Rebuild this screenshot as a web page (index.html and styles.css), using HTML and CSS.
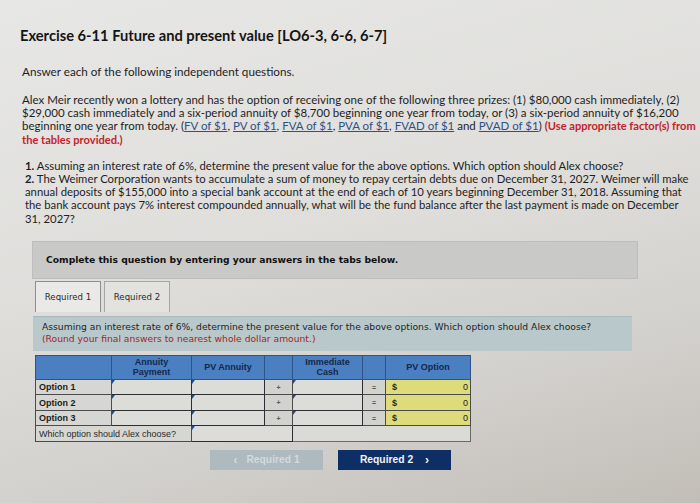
FILE: index.html
```html
<!DOCTYPE html>
<html lang="en">
<head>
<meta charset="utf-8">
<title>Exercise 6-11</title>
<link rel="stylesheet" href="styles.css">
</head>
<body>
<div class="page">
  <h1 class="title">Exercise 6-11 Future and present value [LO6-3, 6-6, 6-7]</h1>
  <p class="intro">Answer each of the following independent questions.</p>
  <p class="para">Alex Meir recently won a lottery and has the option of receiving one of the following three prizes: (1) $80,000 cash immediately, (2)<br>$29,000 cash immediately and a six-period annuity of $8,700 beginning one year from today, or (3) a six-period annuity of $16,200<br>beginning one year from today. (<a href="#">FV of $1</a>, <a href="#">PV of $1</a>, <a href="#">FVA of $1</a>, <a href="#">PVA of $1</a>, <a href="#">FVAD of $1</a> and <a href="#">PVAD of $1</a>) <span class="red">(Use appropriate factor(s) from<br>the tables provided.)</span></p>
  <p class="list"><b>1.</b> Assuming an interest rate of 6%, determine the present value for the above options. Which option should Alex choose?<br><b>2.</b> The Weimer Corporation wants to accumulate a sum of money to repay certain debts due on December 31, 2027. Weimer will make<br>annual deposits of $155,000 into a special bank account at the end of each of 10 years beginning December 31, 2018. Assuming that<br>the bank account pays 7% interest compounded annually, what will be the fund balance after the last payment is made on December<br>31, 2027?</p>

  <div class="complete">Complete this question by entering your answers in the tabs below.</div>

  <div class="tabs">
    <div class="tab tab-active">Required 1</div>
    <div class="tab">Required 2</div>
  </div>

  <div class="panel">
    <div class="panel-line">Assuming an interest rate of 6%, determine the present value for the above options. Which option should Alex choose?</div>
    <div class="panel-line panel-red">(Round your final answers to nearest whole dollar amount.)</div>
  </div>

  <table class="grid">
    <colgroup>
      <col class="c-label"><col class="c-pay"><col class="c-pva"><col class="c-op1"><col class="c-cash"><col class="c-op2"><col class="c-pvo">
    </colgroup>
    <thead>
      <tr>
        <th></th>
        <th>Annuity<br>Payment</th>
        <th>PV Annuity</th>
        <th></th>
        <th>Immediate<br>Cash</th>
        <th></th>
        <th>PV Option</th>
      </tr>
    </thead>
    <tbody>
      <tr>
        <td class="label">Option 1</td>
        <td class="input"></td>
        <td class="input"></td>
        <td class="op">+</td>
        <td class="input"></td>
        <td class="op">=</td>
        <td class="pvo"><span class="dollar">$</span><span>0</span></td>
      </tr>
      <tr>
        <td class="label">Option 2</td>
        <td class="input"></td>
        <td class="input"></td>
        <td class="op">+</td>
        <td class="input"></td>
        <td class="op">=</td>
        <td class="pvo"><span class="dollar">$</span><span>0</span></td>
      </tr>
      <tr>
        <td class="label">Option 3</td>
        <td class="input"></td>
        <td class="input"></td>
        <td class="op">+</td>
        <td class="input"></td>
        <td class="op">=</td>
        <td class="pvo"><span class="dollar">$</span><span>0</span></td>
      </tr>
      <tr>
        <td class="label label-plain" colspan="2">Which option should Alex choose?</td>
        <td class="input" colspan="2"></td>
        <td class="blank" colspan="3"></td>
      </tr>
    </tbody>
  </table>

  <div class="nav">
    <div class="btn btn-prev"><span class="chev">&lsaquo;</span>Required 1</div>
    <div class="btn btn-next">Required 2<span class="chev chev-r">&rsaquo;</span></div>
  </div>
</div>
</body>
</html>
```

FILE: styles.css
```css
html, body {
  margin: 0;
  padding: 0;
}
body {
  width: 700px;
  height: 503px;
  overflow: hidden;
  background: linear-gradient(165deg, #e7e7e5 0%, #dfdedb 45%, #d2d0cc 75%, #c2bdb7 100%);
  font-family: "Lato", "Liberation Sans", sans-serif;
  color: #1e1e1e;
}
.page {
  padding: 26px 10px 0 20px;
}
.title {
  margin: 0;
  font-size: 14.7px;
  line-height: 18px;
  font-weight: 700;
  color: #151515;
}
.intro {
  margin: 20px 0 0 2px;
  font-size: 11.7px;
  line-height: 14px;
}
.para {
  margin: 15px 0 0 2px;
  font-size: 11.5px;
  line-height: 13.2px;
  white-space: nowrap;
}
.para a {
  color: #2d5187;
  text-decoration: underline;
}
.red {
  color: #c3232c;
  font-weight: 700;
  font-size: 11.1px;
}
.list {
  margin: 13px 0 0 5px;
  font-size: 11.3px;
  line-height: 13.2px;
  white-space: nowrap;
}
.complete {
  margin: 16px 0 0 12px;
  width: 591px;
  height: 36px;
  padding-left: 13px;
  display: flex;
  align-items: center;
  background: #c9cac7;
  border: 1px solid #bdbebb;
  box-sizing: content-box;
  font-family: "DejaVu Sans", sans-serif;
  font-size: 9.2px;
  font-weight: 700;
  color: #111;
}
.tabs {
  display: flex;
  gap: 3px;
  margin: 2px 0 0 15px;
}
.tab {
  width: 64px;
  height: 30px;
  display: flex;
  align-items: center;
  justify-content: center;
  border: 1px solid #a6a6a4;
  border-bottom: none;
  background: #e2e2df;
  font-family: "DejaVu Sans", sans-serif;
  font-size: 8.6px;
  color: #2a2a2a;
}
.tab-active {
  background: #e9e9e7;
  border-color: #8e8e8c;
}
.panel {
  margin: 4px 0 0 13px;
  width: 599px;
  height: 35px;
  padding: 4px 0 0 9px;
  box-sizing: border-box;
  background: #b9c8ca;
  border-top: 1px solid #a9b9bc;
  font-family: "DejaVu Sans", sans-serif;
  font-size: 9.2px;
  line-height: 12px;
  color: #1f2326;
}
.panel-red {
  color: #a3252c;
}
.grid {
  margin: 4px 0 0 15px;
  border-collapse: collapse;
  table-layout: fixed;
  width: 435px;
  font-family: "Liberation Sans", Arial, sans-serif;
  font-size: 9px;
}
.c-label { width: 76px; }
.c-pay { width: 80px; }
.c-pva { width: 73px; }
.c-op1 { width: 28px; }
.c-cash { width: 70px; }
.c-op2 { width: 23px; }
.c-pvo { width: 85px; }
.grid th {
  height: 23px;
  padding: 0;
  background: #4a7fc2;
  border: 1px solid #2d5387;
  color: #14284a;
  font-weight: 700;
  line-height: 10px;
  text-align: center;
}
.grid td {
  height: 14.5px;
  padding: 0;
  border: 1px solid #4b4b4b;
  background: #d6d6d2;
}
.grid .label {
  padding-left: 3px;
  font-weight: 700;
  color: #1c1c1c;
}
.grid .label-plain {
  font-weight: 400;
  color: #2a2a2a;
}
.grid .input {
  position: relative;
  background: #dcdcd9;
  border: 1px solid #2d2d33;
}
.grid .input::before {
  content: "";
  position: absolute;
  left: 0;
  top: 0;
  border-top: 4px solid #1f4b8f;
  border-right: 3px solid transparent;
}
.grid .op {
  text-align: center;
  font-size: 7px;
  font-weight: 700;
  color: #5a5a5a;
  background: #d2d2ce;
}
.grid .pvo {
  background: #dedb7b;
  padding: 0 2px 0 6px;
  color: #222;
  text-align: right;
}
.grid .dollar {
  float: left;
  font-weight: 700;
  color: #20301f;
}
.grid .blank {
  background: #dadad6;
  border-color: #6a6a6a;
}
.nav {
  display: flex;
  gap: 15px;
  margin: 8px 0 0 190px;
}
.btn {
  width: 113px;
  height: 20px;
  display: flex;
  align-items: center;
  justify-content: center;
  font-family: "Liberation Sans", Arial, sans-serif;
  font-size: 10.3px;
  font-weight: 700;
}
.chev {
  font-size: 12px;
  margin-right: 9px;
}
.chev-r {
  margin-right: 0;
  margin-left: 12px;
}
.btn-prev {
  background: #aeb9c0;
  color: #d3dade;
}
.btn-next {
  background: #0d2f66;
  color: #f2f4f8;
}
```
